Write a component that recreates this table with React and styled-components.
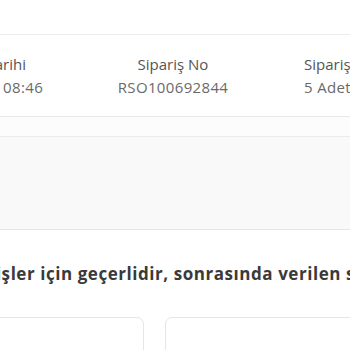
import React from "react";
import styled, { createGlobalStyle } from "styled-components";

const Global = createGlobalStyle`
  html, body { margin: 0; padding: 0; background: #ffffff; overflow: hidden; }
  body { font-family: "Open Sans", "Noto Sans", sans-serif; }
`;

const Page = styled.div`
  width: 350px;
  height: 350px;
  overflow: hidden;
  display: flex;
  flex-direction: column;
`;

const TopSpace = styled.div`
  height: 34px;
  flex: none;
`;

const InfoCard = styled.section`
  flex: none;
  height: 81px;
  border-top: 1px solid #ececec;
  border-bottom: 1px solid #e9e9e9;
  display: flex;
  align-items: center;
`;

const InfoGrid = styled.div`
  display: grid;
  grid-template-columns: repeat(3, 192px);
  margin-left: -115px;
  flex: none;
`;

const InfoCol = styled.div`
  display: flex;
  flex-direction: column;
  gap: 5px;
  text-align: ${(p) => p.$align || "center"};
  padding-left: ${(p) => p.$pad || 0}px;
  white-space: nowrap;
`;

const Label = styled.span`
  font-size: 15px;
  line-height: 18px;
  color: #555555;
`;

const Value = styled.span`
  font-size: 15px;
  line-height: 18px;
  letter-spacing: 0.35px;
  color: #6a6a6a;
`;

const Strip = styled.div`
  flex: none;
  height: 19px;
  background: #fcfcfc;
  border-bottom: 1px solid #ebebeb;
`;

const GrayBlock = styled.div`
  flex: none;
  height: 92px;
  background: #f9f9f9;
  border-bottom: 1px solid #e6e6e6;
`;

const Notice = styled.p`
  margin: 34px 0 0 -149px;
  white-space: nowrap;
  font-size: 17px;
  line-height: 20px;
  font-weight: 700;
  letter-spacing: 0.55px;
  color: #3a3a3a;
`;

const Boxes = styled.div`
  display: flex;
  gap: 21px;
  margin-top: 33px;
  margin-left: -60px;
`;

const Box = styled.div`
  flex: none;
  width: ${(p) => p.$w}px;
  height: 60px;
  border: 1px solid #e6e6e6;
  border-radius: 7px;
  background: #ffffff;
`;

export default function App() {
  return (
    <Page>
      <Global />
      <TopSpace />
      <InfoCard>
        <InfoGrid>
          <InfoCol>
            <Label>Sipariş Tarihi</Label>
            <Value>12.03.2024 08:46</Value>
          </InfoCol>
          <InfoCol>
            <Label>Sipariş No</Label>
            <Value>RSO100692844</Value>
          </InfoCol>
          <InfoCol $align="left" $pad={35}>
            <Label>Sipariş Adedi</Label>
            <Value>5 Adet</Value>
          </InfoCol>
        </InfoGrid>
      </InfoCard>
      <Strip />
      <GrayBlock />
      <Notice>
        Kampanya siparişler için geçerlidir, sonrasında verilen siparişler için geçerli değildir.
      </Notice>
      <Boxes>
        <Box $w={202} />
        <Box $w={220} />
      </Boxes>
    </Page>
  );
}
